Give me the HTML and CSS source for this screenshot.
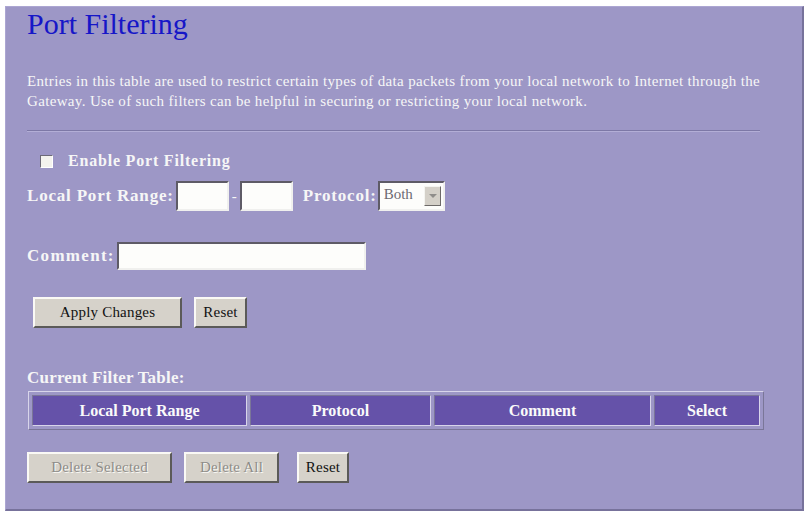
FILE: index.html
```html
<!DOCTYPE html>
<html lang="en">

<head>
  <meta charset="UTF-8">
  <link rel="stylesheet" href="styles.css">
</head>

<body>
  <div class="panel">
    <h1 class="title">Port Filtering</h1>
    <p class="intro">
      Entries in this table are used to restrict certain types of data packets from your local network to Internet through the<br>
      Gateway. Use of such filters can be helpful in securing or restricting your local network.
    </p>
    <hr class="rule">

    <!-- form -->
    <form class="form">
      <div class="row check-row">
        <input class="check" type="checkbox">
        <label class="label">Enable Port Filtering</label>
      </div>
      <div class="row range-row">
        <label class="label">Local Port Range:</label>
        <input class="field port" type="text">
        <span class="dash">-</span>
        <input class="field port" type="text">
        <label class="label protocol">Protocol:</label>
        <span class="select">
          <span class="select-text">Both</span>
          <span class="select-arrow"></span>
        </span>
      </div>
      <div class="row comment-row">
        <label class="label">Comment:</label>
        <input class="field comment" type="text">
      </div>
      <div class="buttons apply-row">
        <button class="btn apply" type="button">Apply Changes</button>
        <button class="btn reset" type="button">Reset</button>
      </div>
    </form>

    <!-- table -->
    <div class="table-title">Current Filter Table:</div>
    <table class="filters">
      <tr>
        <th class="col-range">Local Port Range</th>
        <th class="col-proto">Protocol</th>
        <th class="col-comment">Comment</th>
        <th class="col-select">Select</th>
      </tr>
    </table>
    <div class="buttons delete-row">
      <button class="btn disabled del-sel" type="button">Delete Selected</button>
      <button class="btn disabled del-all" type="button">Delete All</button>
      <button class="btn reset" type="button">Reset</button>
    </div>
  </div>
</body>

</html>
```

FILE: styles.css
```css
body {
  margin: 0;
  background: #fff;
  font-family: "Liberation Serif", "Times New Roman", serif;
}

.panel {
  margin: 6px 0 0 5px;
  width: 775px;
  height: 502px;
  padding: 0 0 0 21px;
  background-color: #9d97c6;
  border-top: 1px solid #aca6d2;
  border-left: 1px solid #aca6d2;
  border-right: 2px solid #77729b;
  border-bottom: 2px solid #77729b;
  color: #f6f6f6;
}

.title {
  margin: 0;
  font-size: 30px;
  line-height: 34px;
  font-weight: normal;
  color: #1616c8;
}

.intro {
  margin: 30px 0 0;
  font-size: 15px;
  line-height: 20px;
  letter-spacing: 0.34px;
  white-space: nowrap;
}

.rule {
  margin: 19px 0 0;
  width: 733px;
  height: 0;
  border: none;
  border-top: 1px solid #7d78a6;
  border-bottom: 1px solid #b3aed6;
}

.form {
  margin: 0;
}

.row {
  display: flex;
  align-items: center;
}

.check-row {
  margin-top: 21px;
  height: 16px;
}

.check {
  appearance: none;
  margin: 0 15px 0 13px;
  width: 13px;
  height: 13px;
  background: #f4f3ee;
  border: 1px solid;
  border-color: #6d6a78 #fff #fff #6d6a78;
}

.label {
  font-size: 17px;
  font-weight: bold;
  letter-spacing: 0.8px;
}

.row .label:first-child {
  margin-right: 2px;
}

.check-row .label {
  font-size: 16px;
}

.field {
  margin: 0;
  padding: 0;
  height: 30px;
  box-sizing: border-box;
  background: #fdfdfb;
  border: 2px solid;
  border-color: #5e5b66 #f0f0ee #f0f0ee #5e5b66;
}

.port {
  width: 53px;
}

.range-row {
  margin-top: 12px;
}

.dash {
  margin: 0 3px;
  font-size: 15px;
}

.protocol {
  margin: 0 1px 0 10px;
}

.select {
  display: flex;
  align-items: flex-start;
  width: 67px;
  height: 30px;
  box-sizing: border-box;
  padding: 2px 2px 0 4px;
  background: #fdfdfb;
  border: 2px solid;
  border-color: #5e5b66 #f0f0ee #f0f0ee #5e5b66;
}

.select-text {
  flex: 1;
  font-size: 15px;
  line-height: 18px;
  color: #6c6a72;
}

.select-arrow {
  position: relative;
  width: 17px;
  height: 20px;
  margin-top: 1px;
  box-sizing: border-box;
  background: #d4d0c8;
  border: 1px solid;
  border-color: #f4f4f0 #6d6a68 #6d6a68 #f4f4f0;
}

.select-arrow::after {
  content: "";
  position: absolute;
  left: 4px;
  top: 7px;
  border-left: 4px solid transparent;
  border-right: 4px solid transparent;
  border-top: 4px solid #8f8d8a;
}

.comment-row {
  margin-top: 31px;
}

.comment-row .label {
  letter-spacing: 1.3px;
}

.comment {
  width: 249px;
  height: 28px;
}

.buttons {
  display: flex;
  gap: 12px;
}

.apply-row {
  margin: 27px 0 0 6px;
}

.btn {
  margin: 0;
  padding: 0;
  height: 31px;
  box-sizing: border-box;
  font-family: "Liberation Serif", "Times New Roman", serif;
  font-size: 15px;
  letter-spacing: 0.2px;
  color: #111;
  background: #d6d2ca;
  border: 2px solid;
  border-color: #faf9f5 #5b5a58 #5b5a58 #faf9f5;
}

.apply {
  width: 149px;
}

.reset {
  width: 53px;
}

.disabled {
  color: #8e8c88;
  text-shadow: 1px 1px 0 #fbfaf6;
}

.table-title {
  margin-top: 40px;
  font-size: 17px;
  font-weight: bold;
  letter-spacing: 0.2px;
  line-height: 20px;
}

.filters {
  margin: 3px 0 0 1px;
  width: 736px;
  border-collapse: separate;
  border-spacing: 3px;
  border: 1px solid;
  border-color: #d8d5ea #7a7698 #7a7698 #d8d5ea;
}

.filters th {
  height: 29px;
  padding: 0;
  background-color: #6552a9;
  border: 1px solid;
  border-color: #7a7698 #d8d5ea #d8d5ea #7a7698;
  font-size: 16px;
  color: #fafafa;
}

.col-range {
  width: 213px;
}

.col-proto {
  width: 179px;
}

.col-comment {
  width: 215px;
}

.delete-row {
  margin-top: 22px;
}

.del-sel {
  width: 145px;
}

.del-all {
  width: 95px;
}

.delete-row .reset {
  margin-left: 6px;
  width: 52px;
}
```
